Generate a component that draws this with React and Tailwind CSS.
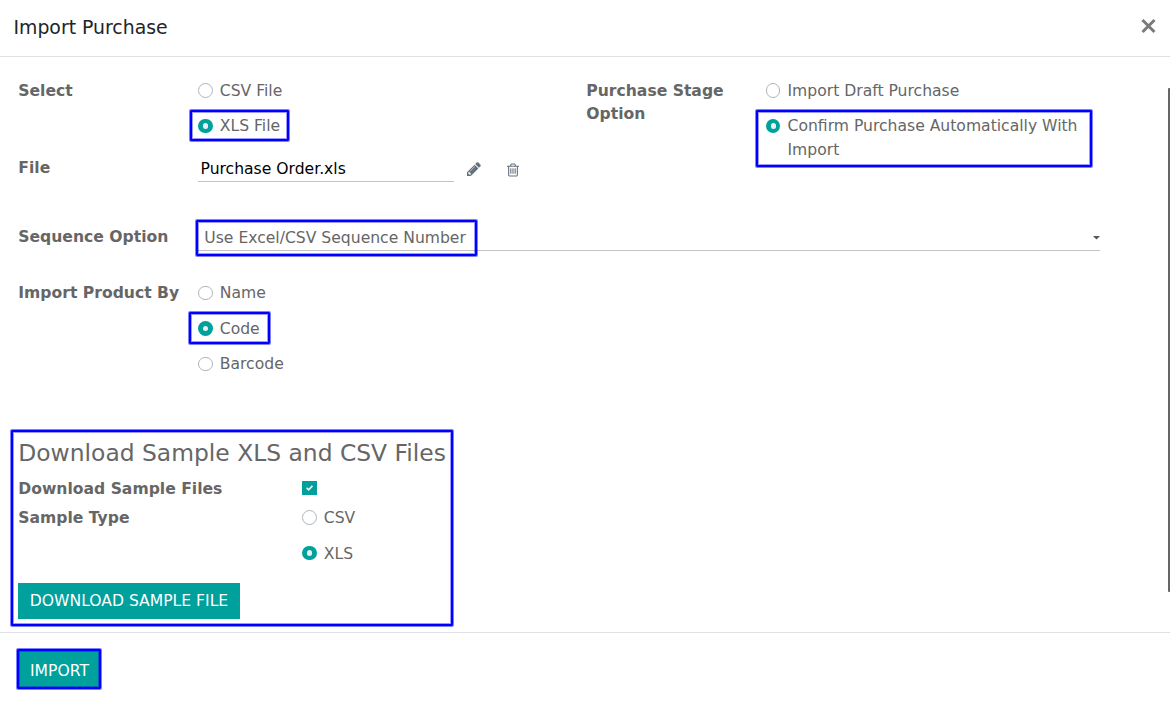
function Highlight({ className }) {
  return (
    <span
      className={`pointer-events-none absolute rounded-[1px] border-2 border-[#0000ff] shadow-[0_0_0_1px_rgba(0,0,255,0.5),inset_0_0_0_1px_rgba(0,0,255,0.4)] ${className}`}
    />
  );
}

function Radio({ label, checked, circle = "mt-[5px] h-[15px] w-[15px]", dot = "h-[6px] w-[5px]", gap = "gap-[6.8px]", className = "", children }) {
  return (
    <label className={`relative flex items-start ${gap} ${className}`}>
      <span
        className={`flex shrink-0 items-center justify-center rounded-full ${circle} ${
          checked ? "bg-[#00a09d]" : "border border-[#adb5bd]"
        }`}
      >
        {checked && <span className={`rounded-full bg-[#eeeeee] ${dot}`} />}
      </span>
      <span className="pt-px leading-[24px]">{label}</span>
      {children}
    </label>
  );
}

function Label({ className, children }) {
  return <div className={`shrink-0 pl-[0.3px] font-bold leading-[23px] ${className}`}>{children}</div>;
}

export default function App() {
  return (
    <div className="flex h-[713px] w-[1170px] flex-col overflow-hidden bg-white font-['DejaVu_Sans',sans-serif] text-[15.6px] text-[#666666]">
      <header className="flex h-[57px] shrink-0 items-center justify-between border-b border-[#dee2e6] pr-[14px] pl-[13.5px]">
        <h1 className="text-[18.85px] leading-[28px] text-[#212529]">Import Purchase</h1>
        <button aria-label="Close" className="mb-[4px] flex">
          <svg width="16" height="16" viewBox="0 0 16 16" fill="none" stroke="#7a7a7a" strokeWidth="3">
            <path d="M2.500 2 14.500 14M14.500 2 2.500 14" />
          </svg>
        </button>
      </header>

      <main className="flex h-[575px] shrink-0 justify-between">
        <div className="ml-[18px] flex w-[1082px] flex-col pt-[21px]">
          <section className="flex h-[141px]">
            <div className="flex w-[568px] shrink-0 flex-col">
              <div className="flex h-[77px]">
                <Label className="w-[180px] pt-[2px]">Select</Label>
                <div className="flex flex-col">
                  <Radio label="CSV File" className="h-[35px]" />
                  <Radio label="XLS File" checked circle="mt-[6px] h-[14px] w-[15px]">
                    <Highlight className="-top-[3px] -left-[8px] h-[31px] w-[99px]" />
                  </Radio>
                </div>
              </div>
              <div className="flex h-[28px]">
                <Label className="w-[180px] pt-[2px]">File</Label>
                <div className="h-[27px] w-[256px] border-b border-[#c4c4c4] pl-[2.5px] leading-[28px] text-black">
                  Purchase Order.xls
                </div>
                <button aria-label="Edit" className="ml-[13px] flex h-[28px] items-center">
                  <svg width="14" height="14" viewBox="0 0 1536 1536" fill="#66717c">
                    <path d="M363 1408l91-91-235-235-91 91v107h128v128h107zM886 480q0-22-22-22-10 0-17 7L305 1007q-7 7-7 17 0 22 22 22 10 0 17-7l542-542q7-7 7-17zM832 288l416 416-832 832H0v-416zM1515 384q0 53-37 90l-166 166-416-416 166-165q36-38 90-38 53 0 91 38l235 234q37 39 37 91z" />
                  </svg>
                </button>
                <button aria-label="Delete" className="ml-[26px] flex h-[29px] items-center">
                  <svg width="12" height="14" viewBox="0 0 1408 1536" fill="#66717c">
                    <path d="M512 608v576q0 14-9 23t-23 9h-64q-14 0-23-9t-9-23V608q0-14 9-23t23-9h64q14 0 23 9t9 23zm256 0v576q0 14-9 23t-23 9h-64q-14 0-23-9t-9-23V608q0-14 9-23t23-9h64q14 0 23 9t9 23zm256 0v576q0 14-9 23t-23 9h-64q-14 0-23-9t-9-23V608q0-14 9-23t23-9h64q14 0 23 9t9 23zm128 724V384H256v948q0 22 7 40.500t14.500 27 10.500 8.500h832q3 0 10.500-8.500t14.500-27 7-40.500zM480 256h448l-48-117q-7-9-17-11H546q-10 2-17 11zm928 32v64q0 14-9 23t-23 9h-96v948q0 83-47 143.500t-113 60.500H288q-66 0-113-58.500T128 1336V384H32q-14 0-23-9t-9-23v-64q0-14 9-23t23-9h309l70-167q15-37 54-63t79-26h320q40 0 79 26t54 63l70 167h309q14 0 23 9t9 23z" />
                  </svg>
                </button>
              </div>
            </div>

            <div className="flex">
              <Label className="w-[180px] pt-[2px] pr-6">Purchase Stage Option</Label>
              <div className="flex w-[325px] flex-col">
                <Radio
                  label="Import Draft Purchase"
                  className="h-[35px]"
                  gap="gap-[7.5px]"
                  circle="mt-[5px] h-[15px] w-[14px]"
                />
                <Radio
                  label="Confirm Purchase Automatically With Import"
                  checked
                  gap="gap-[7.5px]"
                  circle="mt-[6px] h-[14px] w-[14px]"
                >
                  <Highlight className="-top-[3px] -left-[10px] h-[57px] w-[336px]" />
                </Radio>
              </div>
            </div>
          </section>

          <section className="flex h-[61px]">
            <Label className="w-[180px] pt-[7px]">Sequence Option</Label>
            <div className="relative flex h-[32px] flex-1 justify-between border-b border-[#c4c4c4] pl-[6.3px]">
              <span className="pt-[7px] leading-[24px]">Use Excel/CSV Sequence Number</span>
              <svg className="mt-[17px]" width="7" height="4" viewBox="0 0 7 4" fill="#555">
                <path d="M0 0h7L3.500 3.500z" />
              </svg>
              <Highlight className="top-[1px] -left-[2px] h-[36px] w-[281px]" />
            </div>
          </section>

          <section className="flex h-[152px]">
            <Label className="w-[180px] pt-[2px]">Import Product By</Label>
            <div className="flex flex-col">
              <Radio label="Name" className="h-[36px]" circle="mt-[6px] h-[14px] w-[15px]" />
              <Radio label="Code" checked className="h-[35px]" dot="h-[5px] w-[5px]">
                <Highlight className="-top-[4px] -left-[9px] h-[32px] w-[81px]" />
              </Radio>
              <Radio label="Barcode" circle="mt-[6px] h-[14px] w-[15px]" />
            </div>
          </section>

          <section className="relative flex h-[192px] w-[436px] flex-col">
            <Highlight className="-top-[2px] -left-[7px] h-[196px] w-[442px]" />
            <h2 className="h-[44px] pt-[5px] pl-[0.3px] text-[23.4px] leading-[32px] whitespace-nowrap">
              Download Sample XLS and CSV Files
            </h2>
            <div className="flex h-[29px]">
              <Label className="w-[284px] pt-[2px]">Download Sample Files</Label>
              <span className="mt-[5px] flex h-[14px] w-[15px] items-center justify-center bg-[#00a09d]">
                <svg width="7" height="6" viewBox="0 0 7 6" fill="none" stroke="#eee" strokeWidth="1.700">
                  <path d="M.6 2.800 2.700 4.800 6.400.8" />
                </svg>
              </span>
            </div>
            <div className="flex h-[78px]">
              <Label className="w-[284px] pt-[2px]">Sample Type</Label>
              <div className="flex flex-col">
                <Radio label="CSV" className="h-[36px]" />
                <Radio label="XLS" checked circle="mt-[5px] h-[14px] w-[15px]" />
              </div>
            </div>
            <button className="h-[36px] w-[222px] shrink-0 bg-[#00a09d] pt-[2px] text-white">
              DOWNLOAD SAMPLE FILE
            </button>
          </section>
        </div>
        <div className="mt-[31px] h-[504px] w-[2px] rounded-l-[1px] bg-[#666666]" />
      </main>

      <footer className="flex flex-1 border-t border-[#dee2e6] pt-[17px] pl-[18px]">
        <button className="relative h-[38px] w-[82px] bg-[#00a09d] pt-[5px] pl-px text-white">
          IMPORT
          <Highlight className="-top-[1px] -left-[1px] h-[40px] w-[84px]" />
        </button>
      </footer>
    </div>
  );
}
